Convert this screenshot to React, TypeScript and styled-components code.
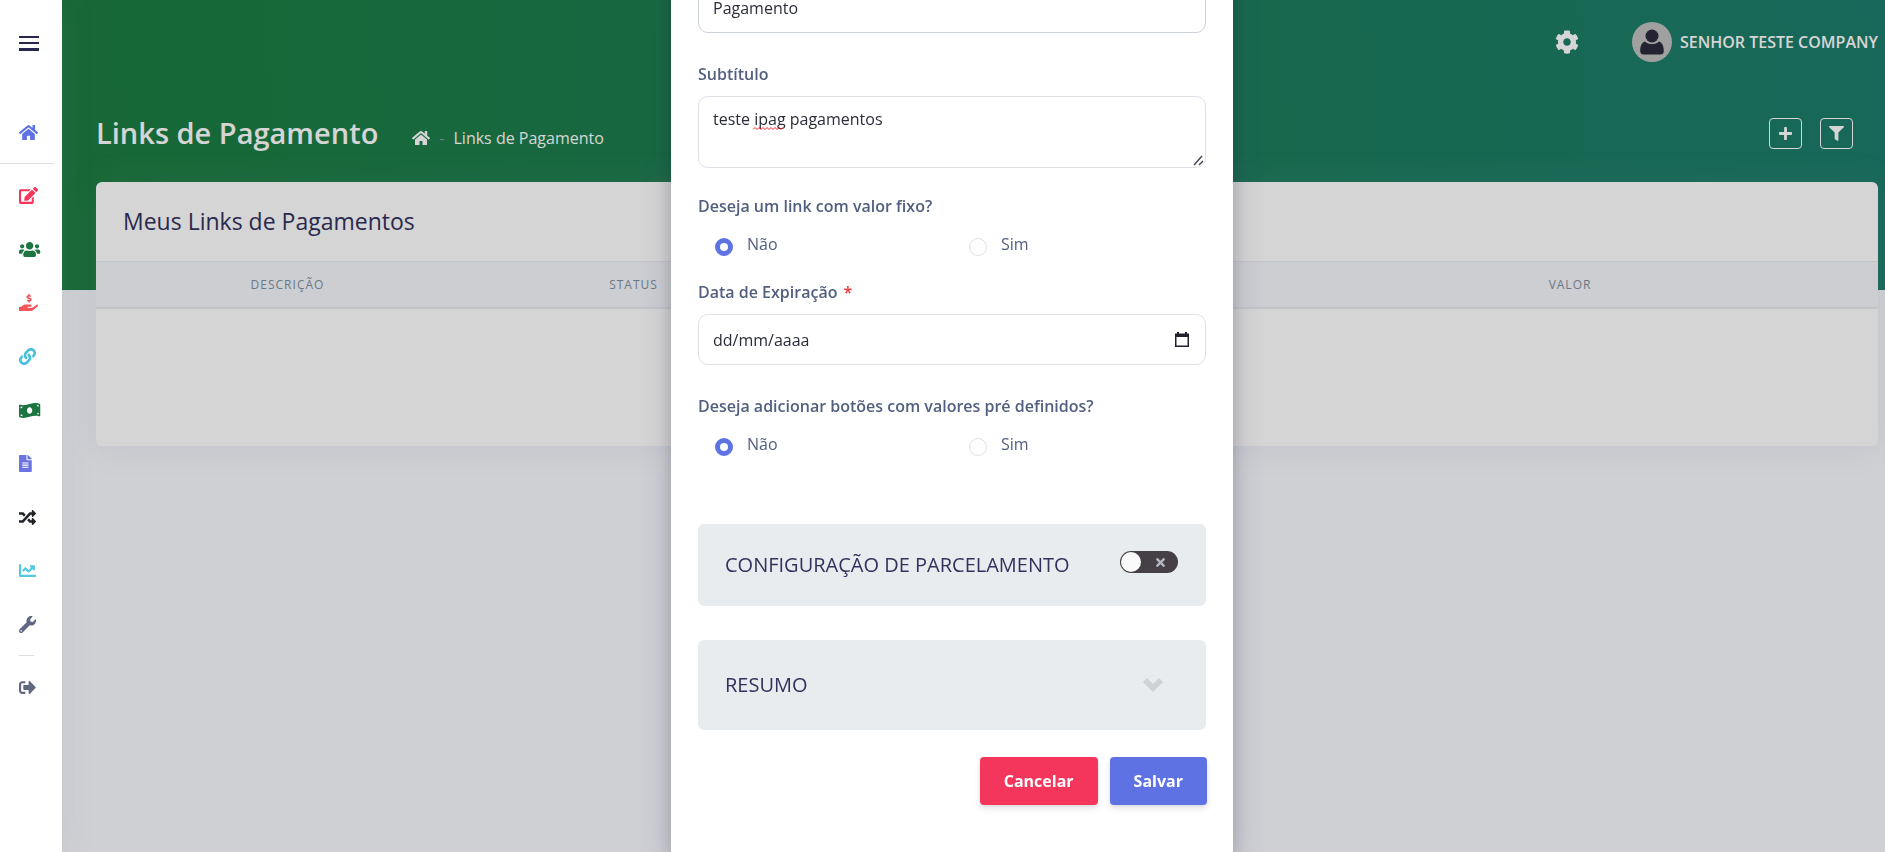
import React from 'react';
import styled, { createGlobalStyle, css } from 'styled-components';
import { FaHome, FaEdit, FaUsers, FaHandHoldingUsd, FaLink, FaMoneyBillWave, FaFileAlt, FaRandom, FaChartLine, FaWrench, FaSignOutAlt, FaCog, FaPlus, FaFilter, FaTimes } from 'react-icons/fa';

const Global = createGlobalStyle`
  *, *::before, *::after { box-sizing: border-box; }
  body { margin: 0; background: #f8f9fe; font-family: "Open Sans", "Noto Sans", sans-serif; font-size: 16px; line-height: 24px; color: #525f7f; overflow: hidden; }
  h1, h2, h3, p, ul, fieldset { margin: 0; padding: 0; border: 0; }
  button, input, textarea { font: inherit; }
  a { color: inherit; text-decoration: none; }
`;

const Shell = styled.div`display: flex; min-height: 100vh;`;

const Sidebar = styled.nav`
  position: relative; z-index: 20; flex: none; width: 62px; min-height: 100vh;
  padding-top: 32px; background: #fff; box-shadow: 0 0 32px rgba(136, 152, 170, 0.15);
`;
const MenuButton = styled.button`
  display: flex; flex-direction: column; gap: 4px; width: 20px; height: 22px; margin: 0 0 67px 19px;
  padding: 4px 0 0; border: 0; background: none;
`;
const MenuBar = styled.span`
  display: block; width: 20px; height: 2px; background: #26264e;
  &:last-child { height: 3px; }
`;
const NavList = styled.ul<{ $tall?: boolean }>`
  display: flex; flex-direction: column; list-style: none;
  ${p => p.$tall && css`height: 482px; margin-top: 5px;`}
`;
const NavItem = styled.li`flex: 1; display: flex;`;
const NavLink = styled.a<{ $color: string; $width?: number }>`
  flex: 1; display: flex; align-items: center; min-height: 22px; padding-left: 19px;
  color: ${p => p.$color};
  svg { width: ${p => p.$width ?? 17}px; height: 17px; }
`;
const Rule = styled.hr<{ $short?: boolean }>`
  height: 1px; border: 0; background: #dcdde0;
  width: ${p => (p.$short ? '15px' : '54px')};
  margin: ${p => (p.$short ? '4px 0 20px 19px' : '20px 0 0')};
`;

const Main = styled.main`flex: 1; min-width: 0;`;
const Hero = styled.div`
  height: 290px; padding: 0 7px 0 34px;
  background: linear-gradient(87deg, #1c7d40 0%, #1c7d6c 100%);
`;
const TopBar = styled.header`display: flex; justify-content: flex-end; align-items: center; height: 84px;`;
const IconButton = styled.button`display: flex; padding: 0; border: 0; background: none; color: #fff; font-size: 24px; margin-right: 53px;`;
const Profile = styled.a`display: flex; align-items: center; gap: 8px; color: #fff; font-weight: 600;`;
const Avatar = styled.svg`width: 40px; height: 40px;`;
const TitleRow = styled.div`display: flex; align-items: center; height: 98px; padding: 0 25px 0 0;`;
const PageTitle = styled.h1`color: #fff; font-size: 29px; font-weight: 600; line-height: 44px;`;
const Crumbs = styled.div`
  display: flex; align-items: center; gap: 9px; margin: 10px auto 0 34px; color: #fff;
  svg { width: 18px; height: 16px; }
`;
const Dash = styled.span`color: #8898aa;`;
const OutlineButton = styled.button`
  display: flex; align-items: center; justify-content: center; width: 33px; height: 31px; margin-left: 18px;
  padding: 0; border: 1px solid #fff; border-radius: 4px; background: none; color: #fff; font-size: 15px;
`;

const Card = styled.section`
  border-radius: 6px; background: #fff; overflow: hidden;
  box-shadow: 0 0 32px rgba(136, 152, 170, 0.15);
`;
const CardTitle = styled.h2`padding: 23px 27px 24px; color: #32325d; font-size: 23px; font-weight: 500; line-height: 32px;`;
const Table = styled.table`width: 100%; table-layout: fixed; border-collapse: collapse;`;
const Th = styled.th`
  height: 46px; padding: 2px 0 0; background: #f6f7fc; border: solid #e9ecef; border-width: 1px 0 2px;
  color: #8190a2; font-size: 12px; font-weight: 500; letter-spacing: 1px; text-align: center; text-transform: uppercase;
`;
const Td = styled.td`height: 138px; padding: 0;`;

const Backdrop = styled.div`
  position: fixed; inset: 0; z-index: 10; display: flex; justify-content: center; align-items: flex-start;
  background: rgba(0, 0, 0, 0.165); overflow: hidden; padding-left: 19px;
`;
const Modal = styled.form`
  flex: none; width: 562px; min-height: calc(100vh + 79px); margin-top: -79px; padding: 27px;
  background: #fff; box-shadow: 0 15px 35px rgba(50, 50, 93, 0.2), 0 5px 15px rgba(0, 0, 0, 0.17);
`;
const Field = styled.div<{ $gap?: number }>`
  display: flex; flex-direction: column; gap: 10px; margin-bottom: ${p => p.$gap ?? 29}px;
`;
const labelText = css`color: #525f7f; font-weight: 600; line-height: 24px;`;
const Label = styled.label`${labelText}`;
const Required = styled.span`color: #f0343c; margin-left: 2px;`;
const control = css`
  width: 100%; padding: 10px 14px; border: 1px solid #dee2e6; border-radius: 10px;
  background: #fff; color: #2b2d3b; outline: 0;
`;
const Input = styled.input<{ $active?: boolean }>`
  ${control} height: 51px;
  ${p => p.$active && css`border-color: #cad1d7;`}
  &::placeholder { color: #2b2d3b; opacity: 1; }
`;
const TextBox = styled.div`position: relative; display: flex;`;
const Textarea = styled.textarea`${control} height: 72px; resize: none; display: block;`;
const Squiggle = styled.svg`position: absolute; left: 55px; top: 31px; width: 31px; height: 3px;`;
const Grip = styled.svg`position: absolute; right: 2px; bottom: 2px; width: 11px; height: 11px;`;
const DateBox = styled.div`position: relative; display: flex; align-items: center;`;
const CalendarButton = styled.button`
  position: absolute; right: 17px; display: flex; padding: 0; border: 0; background: none;
`;
const Group = styled.fieldset<{ $gap: number }>`min-width: 0; margin-bottom: ${p => p.$gap}px;`;
const Legend = styled.legend`${labelText} padding: 0; margin-bottom: 14px;`;
const Choices = styled.div`display: grid; grid-template-columns: 1fr 1fr; height: 27px;`;
const Choice = styled.label`
  display: flex; align-items: flex-start; gap: 14px; padding-left: 17px; color: #525f7f; line-height: 24px;
`;
const Radio = styled.input`
  appearance: none; width: 18px; height: 18px; margin: 6px 0 0; border: 1px solid #dee2e6; border-radius: 50%; background: #fff;
  &:checked { border: 5px solid #5e72e4; }
`;
const Panel = styled.section<{ $height: number; $gap: number }>`
  display: flex; align-items: center; justify-content: space-between; height: ${p => p.$height}px;
  margin-bottom: ${p => p.$gap}px; padding: 0 28px 0 27px; border-radius: 6px; background: #e9ecef;
`;
const PanelTitle = styled.h3`color: #32325d; font-size: 20px; font-weight: 500; line-height: 28px; text-transform: uppercase;`;
const Toggle = styled.label`
  position: relative; display: flex; align-items: center; justify-content: flex-end; width: 58px; height: 22px;
  margin-bottom: 6px; padding-right: 11px; border-radius: 11px; background: #444045; color: #b4b6c2; font-size: 13px;
`;
const ToggleInput = styled.input`
  appearance: none; position: absolute; left: 1px; top: 1px; width: 20px; height: 20px; margin: 0; border-radius: 50%; background: #fafafa;
`;
const Expand = styled.button`display: flex; margin-right: 15px; padding: 0; border: 0; background: none;`;
const Actions = styled.div`display: flex; justify-content: flex-end; gap: 12px; margin-right: -1px;`;
const Action = styled.button<{ $color: string }>`
  height: 48px; padding: 0 24px; border: 0; border-radius: 4px; background: ${p => p.$color}; color: #fff; font-weight: 700;
  box-shadow: 0 4px 6px rgba(50, 50, 93, 0.11), 0 1px 3px rgba(0, 0, 0, 0.08);
`;

const nav = [
  { label: 'Editar', color: '#f5365c', icon: FaEdit, width: 19 },
  { label: 'Clientes', color: '#1c7540', icon: FaUsers, width: 22 },
  { label: 'Cobranças', color: '#f4545c', icon: FaHandHoldingUsd, width: 19 },
  { label: 'Links', color: '#48c0dc', icon: FaLink },
  { label: 'Pagamentos', color: '#1c7540', icon: FaMoneyBillWave, width: 22 },
  { label: 'Relatórios', color: '#6b74e0', icon: FaFileAlt, width: 13 },
  { label: 'Split', color: '#212529', icon: FaRandom },
  { label: 'Gráficos', color: '#54c8e4', icon: FaChartLine },
  { label: 'Ferramentas', color: '#5f6880', icon: FaWrench },
];

const YesNo = ({ name, title, gap }: { name: string; title: string; gap: number }) => (
  <Group $gap={gap}>
    <Legend>{title}</Legend>
    <Choices>
      <Choice><Radio type="radio" name={name} defaultChecked />Não</Choice>
      <Choice><Radio type="radio" name={name} />Sim</Choice>
    </Choices>
  </Group>
);

export default function App() {
  return (
    <Shell>
      <Global />
      <Sidebar>
        <MenuButton aria-label="Menu"><MenuBar /><MenuBar /><MenuBar /></MenuButton>
        <NavList>
          <NavItem><NavLink href="#inicio" aria-label="Início" $color="#5e72e4" $width={19}><FaHome /></NavLink></NavItem>
        </NavList>
        <Rule />
        <NavList $tall>
          {nav.map(({ label, color, icon: Icon, width }) => (
            <NavItem key={label}>
              <NavLink href={'#' + label} aria-label={label} $color={color} $width={width}><Icon preserveAspectRatio="xMinYMid meet" /></NavLink>
            </NavItem>
          ))}
        </NavList>
        <Rule $short />
        <NavList>
          <NavItem><NavLink href="#sair" aria-label="Sair" $color="#5f6880"><FaSignOutAlt /></NavLink></NavItem>
        </NavList>
      </Sidebar>

      <Main>
        <Hero>
          <TopBar>
            <IconButton aria-label="Configurações"><FaCog /></IconButton>
            <Profile href="#perfil">
              <Avatar viewBox="0 0 40 40" aria-hidden="true">
                <circle cx="20" cy="20" r="20" fill="#c0c0c0" />
                <circle cx="20" cy="14" r="6.5" fill="#2a2b3c" />
                <path d="M13 19.500c2 2 4.300 2.500 7 2.500s5-.5 7-2.500c3.200 1.200 4.800 4.500 4.800 9.500 0 2.500-1.300 3.500-3.300 3.500h-17c-2 0-3.300-1-3.300-3.500 0-5 1.600-8.300 4.800-9.500z" fill="#2a2b3c" />
              </Avatar>
              SENHOR TESTE COMPANY
            </Profile>
          </TopBar>
          <TitleRow>
            <PageTitle>Links de Pagamento</PageTitle>
            <Crumbs><FaHome /><Dash>-</Dash><a href="#links">Links de Pagamento</a></Crumbs>
            <OutlineButton aria-label="Adicionar"><FaPlus /></OutlineButton>
            <OutlineButton aria-label="Filtrar"><FaFilter /></OutlineButton>
          </TitleRow>
          <Card>
            <CardTitle>Meus Links de Pagamentos</CardTitle>
            <Table>
              <colgroup><col width="383" /><col width="309" /><col /><col width="616" /></colgroup>
              <thead><tr><Th>Descrição</Th><Th>Status</Th><Th /><Th>Valor</Th></tr></thead>
              <tbody><tr><Td colSpan={4} /></tr></tbody>
            </Table>
          </Card>
        </Hero>
      </Main>

      <Backdrop>
        <Modal>
          <Field>
            <Label htmlFor="titulo">Título</Label>
            <Input id="titulo" defaultValue="Pagamento" $active />
          </Field>
          <Field $gap={26}>
            <Label htmlFor="subtitulo">Subtítulo</Label>
            <TextBox>
              <Textarea id="subtitulo" defaultValue="teste ipag pagamentos" />
              <Squiggle viewBox="0 0 31 3" aria-hidden="true">
                <path d="M0 2.500l2-2 2 2 2-2 2 2 2-2 2 2 2-2 2 2 2-2 2 2 2-2 2 2 2-2 2 2 2-2" fill="none" stroke="#f02030" />
              </Squiggle>
              <Grip viewBox="0 0 11 11" aria-hidden="true">
                <path d="M1 10l8-9M6 10l4-4" fill="none" stroke="#45465a" strokeWidth="1.500" />
              </Grip>
            </TextBox>
          </Field>
          <YesNo name="fixo" title="Deseja um link com valor fixo?" gap={21} />
          <Field>
            <Label htmlFor="expiracao">Data de Expiração <Required>*</Required></Label>
            <DateBox>
              <Input id="expiracao" placeholder="dd/mm/aaaa" />
              <CalendarButton type="button" aria-label="Abrir calendário">
                <svg width="14" height="16" viewBox="0 0 14 16"><path fill="#212230" fillRule="evenodd" d="M2 0h2v1.500h6V0h2v1.500h2V15H0V1.500h2zM1.500 5v8.500h11V5z" /></svg>
              </CalendarButton>
            </DateBox>
          </Field>
          <YesNo name="valores" title="Deseja adicionar botões com valores pré definidos?" gap={65} />
          <Panel $height={82} $gap={34}>
            <PanelTitle>Configuração de Parcelamento</PanelTitle>
            <Toggle><ToggleInput type="checkbox" aria-label="Configuração de Parcelamento" /><FaTimes /></Toggle>
          </Panel>
          <Panel $height={90} $gap={27}>
            <PanelTitle>Resumo</PanelTitle>
            <Expand type="button" aria-label="Expandir resumo">
              <svg width="20" height="14" viewBox="0 0 20 14"><path d="M0 4l4-4 6 6 6-6 4 4-10 10z" fill="#ced1d5" /></svg>
            </Expand>
          </Panel>
          <Actions>
            <Action type="button" $color="#f5365c">Cancelar</Action>
            <Action type="button" $color="#5e72e4">Salvar</Action>
          </Actions>
        </Modal>
      </Backdrop>
    </Shell>
  );
}
